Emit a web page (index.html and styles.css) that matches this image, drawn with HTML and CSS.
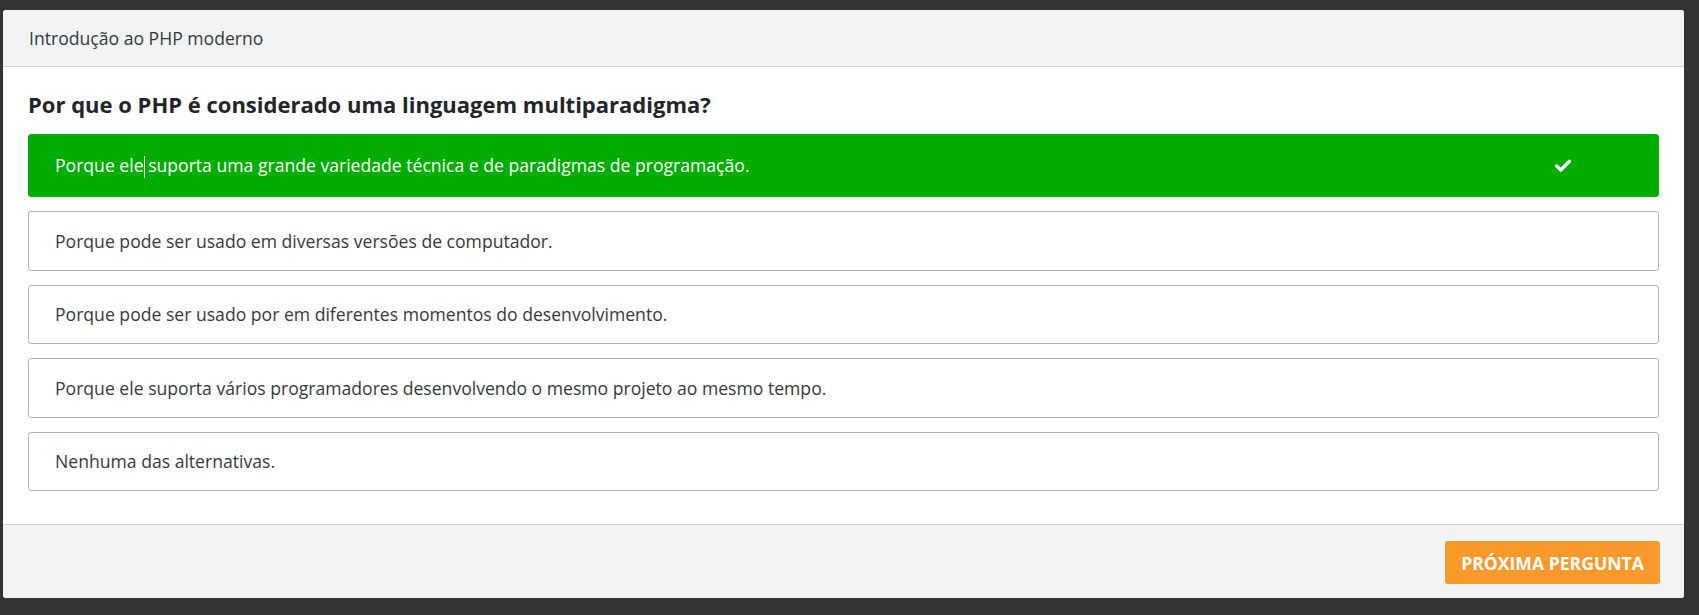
FILE: index.html
```html
<!DOCTYPE html>
<html lang="pt-BR">
<head>
<meta charset="utf-8">
<title>Introdução ao PHP moderno</title>
<link rel="stylesheet" href="styles.css">
</head>
<body>
<div class="card">
  <div class="card-header">Introdução ao PHP moderno</div>
  <div class="card-body">
    <h2 class="question">Por que o PHP é considerado uma linguagem multiparadigma?</h2>
    <ul class="options">
      <li class="option correct">
        <span class="option-text">Porque ele<span class="caret"></span> suporta uma grande variedade técnica e de paradigmas de programação.</span>
        <svg class="check" width="16" height="13" viewBox="0 0 16 13" aria-hidden="true"><path d="M1.6 7.1 L5.8 11 L14.4 2.2" fill="none" stroke="#fff" stroke-width="3.4" stroke-linecap="round" stroke-linejoin="round"/></svg>
      </li>
      <li class="option"><span class="option-text">Porque pode ser usado em diversas versões de computador.</span></li>
      <li class="option"><span class="option-text">Porque pode ser usado por em diferentes momentos do desenvolvimento.</span></li>
      <li class="option"><span class="option-text">Porque ele suporta vários programadores desenvolvendo o mesmo projeto ao mesmo tempo.</span></li>
      <li class="option"><span class="option-text">Nenhuma das alternativas.</span></li>
    </ul>
  </div>
  <div class="card-footer">
    <button class="btn-next" type="button">Próxima pergunta</button>
  </div>
</div>
</body>
</html>
```

FILE: styles.css
```css
* { box-sizing: border-box; }

html, body {
  margin: 0;
  background: #333333;
}

body {
  padding: 10px 15px 17px 3px;
  font-family: "Open Sans", "Noto Sans", sans-serif;
  color: #343a40;
}

.card {
  background: #ffffff;
  border-radius: 3px;
  overflow: hidden;
}

.card-header {
  height: 57px;
  padding: 0 26px;
  display: flex;
  align-items: center;
  background: #f2f3f5;
  border-bottom: 1px solid #cdd2d8;
  font-size: 17.6px;
  color: #343a40;
}

.card-body {
  padding: 24px 25px 33px;
}

.question {
  margin: 0 0 16.6px;
  font-size: 22px;
  line-height: 26.4px;
  font-weight: 700;
  color: #212529;
}

.options {
  list-style: none;
  margin: 0;
  padding: 0;
  display: flex;
  flex-direction: column;
  gap: 14px;
}

.option {
  height: 59.5px;
  padding: 0 26px;
  display: flex;
  align-items: center;
  justify-content: space-between;
  border: 1px solid #adb5bd;
  border-radius: 3px;
  font-size: 17.6px;
  color: #343a40;
}

.option.correct {
  height: 63px;
  padding-right: 87px;
  background: #00ad00;
  border-color: #00ad00;
  color: #ffffff;
}

.caret {
  display: inline-block;
  width: 1px;
  height: 22px;
  margin-right: -1px;
  vertical-align: -6px;
  background: #ffffff;
}

.check { display: block; }

.card-footer {
  padding: 16px 24px 14px;
  display: flex;
  justify-content: flex-end;
  background: #f2f3f5;
  border-top: 1px solid #cdd2d8;
}

.btn-next {
  height: 43px;
  width: 215px;
  padding: 0;
  border: none;
  border-radius: 3px;
  background: #f9992b;
  color: #ffffff;
  font-family: "Open Sans", "Noto Sans", sans-serif;
  font-size: 17.6px;
  font-weight: 700;
  text-transform: uppercase;
}
```
